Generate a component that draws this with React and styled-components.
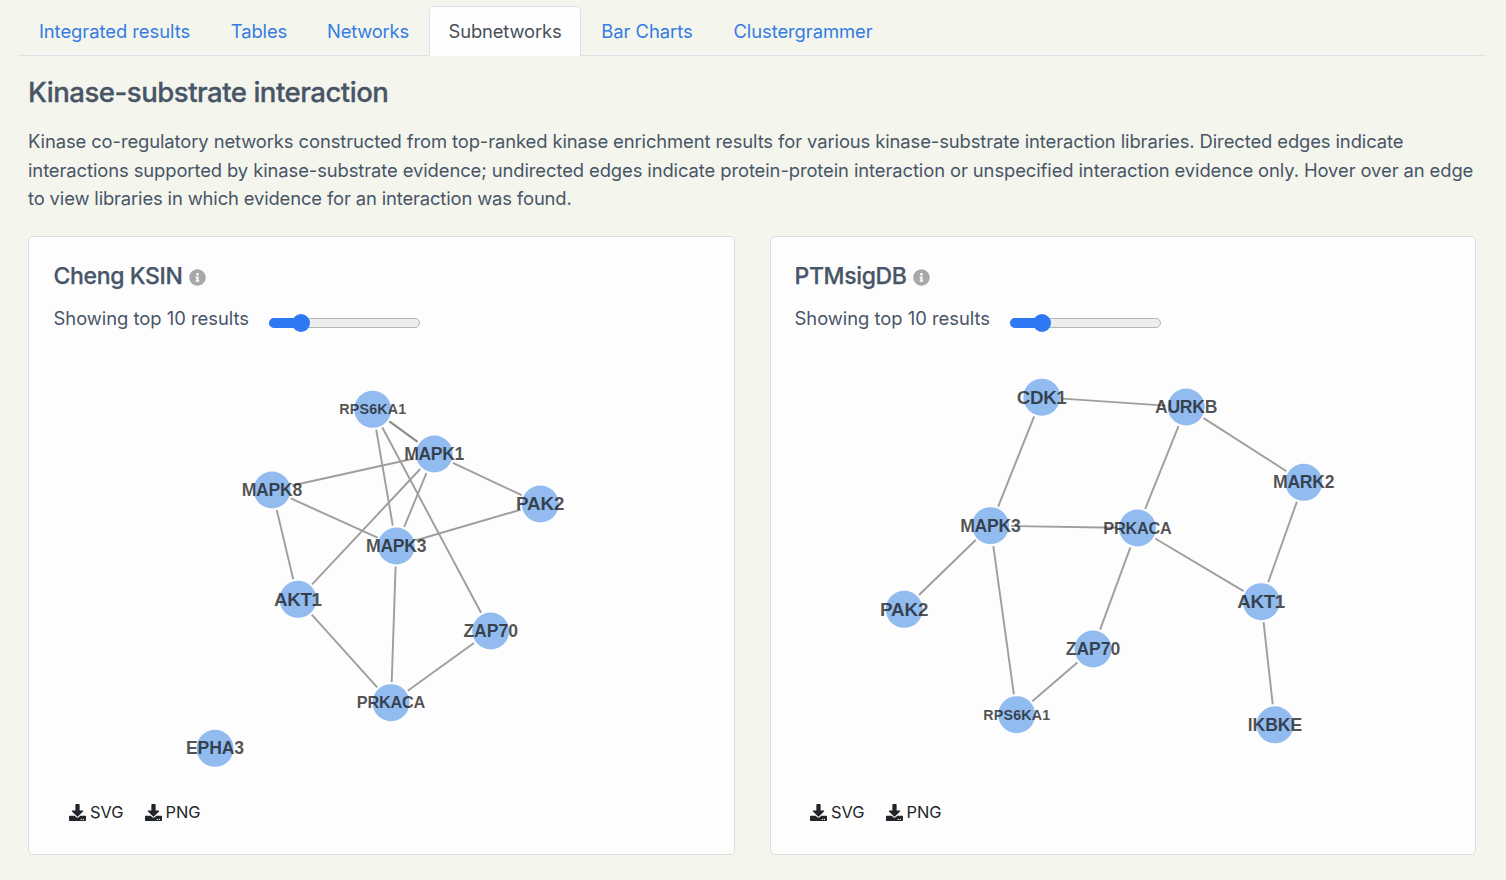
import React from "react";
import styled, { createGlobalStyle } from "styled-components";
import { FaInfoCircle, FaDownload } from "react-icons/fa";

const Global = createGlobalStyle`
  * { box-sizing: border-box; }
  body { margin: 0; background: #f4f5ed; color: #485567; font-family: Inter, "Liberation Sans", sans-serif; font-size: 18.4px; }
`;

const Page = styled.main`
  width: 1506px;
  height: 880px;
  padding-top: 6px;
  overflow: hidden;
`;

const Tabs = styled.nav`
  display: flex;
  height: 50px;
  margin: 0 20px 0 18px;
  border-bottom: 1px solid #dee2e6;
`;

const Tab = styled.a`
  display: flex;
  justify-content: center;
  width: ${(p) => p.$width}px;
  height: 50px;
  line-height: 49px;
  border: 1px solid ${(p) => (p.$active ? "#dee2e6" : "transparent")};
  border-bottom: 0;
  border-radius: 5px 5px 0 0;
  background: ${(p) => (p.$active ? "#fefefe" : "transparent")};
  color: ${(p) => (p.$active ? "#495057" : "#347ce2")};
  letter-spacing: ${(p) => p.$spacing}px;
  white-space: nowrap;
`;

const Content = styled.section`
  padding: 19px 30px 0 28px;
`;

const Heading = styled.h4`
  margin: 0 0 18px;
  font-size: 27.6px;
  font-weight: 500;
  line-height: 34px;
  letter-spacing: -0.51px;
  -webkit-text-stroke: 0.3px currentColor;
`;

const Description = styled.p`
  margin: 0 0 23px;
  line-height: 28.5px;
  height: 86px;
`;

const Line = styled.span`
  display: block;
  white-space: nowrap;
  letter-spacing: ${(p) => p.$spacing}px;
`;

const Cards = styled.div`
  display: grid;
  grid-template-columns: 707px 706px;
  gap: 35px;
`;

const Card = styled.article`
  display: flex;
  flex-direction: column;
  height: 619px;
  border: 1px solid #dcddd9;
  border-radius: 5px;
  background: #fdfdfd;
`;

const CardHeader = styled.header`
  height: 108px;
  padding: 25px 24px 0 ${(p) => p.$inset}px;
`;

const Title = styled.h5`
  display: flex;
  align-items: center;
  gap: 6px;
  margin: 0 0 13px;
  font-size: 23px;
  font-weight: 500;
  line-height: 29px;
  letter-spacing: -0.35px;
  -webkit-text-stroke: 0.25px currentColor;
  svg { margin-top: 2px; font-size: 17px; color: #a8a8a8; }
`;

const Control = styled.div`
  display: flex;
  align-items: center;
  line-height: 29px;
  white-space: nowrap;
`;

const Caption = styled.span`
  width: 215.5px;
  letter-spacing: -0.02px;
`;

const Track = styled.div`
  display: flex;
  align-items: center;
  width: 151px;
  height: 10px;
  margin-top: 9px;
  border: 1px solid #b5b5b5;
  border-radius: 5px;
  background: #ededed;
`;

const Fill = styled.div`
  flex: none;
  width: 32px;
  height: 10px;
  margin-left: -1px;
  border-radius: 5px 0 0 5px;
  background: #2e78f3;
`;

const Thumb = styled.div`
  flex: none;
  width: 18px;
  height: 18px;
  margin-left: -9px;
  border-radius: 50%;
  background: #2e78f3;
`;

const Graph = styled.svg`
  display: block;
  flex: none;
  width: 100%;
  height: 440px;
`;

const Edge = styled.line`
  stroke: ${(p) => (p.$strong ? "#8b8b8b" : "#9e9e9e")};
  stroke-width: ${(p) => (p.$strong ? 2.1 : 1.9)}px;
`;

const Dot = styled.circle`
  fill: #92bbef;
`;

const Label = styled.text`
  font-family: "Liberation Sans", Arial, sans-serif;
  font-weight: 700;
  fill: #111;
  fill-opacity: 0.73;
  text-anchor: middle;
`;

const Downloads = styled.footer`
  display: flex;
  gap: 21px;
  height: 54px;
  padding-left: ${(p) => p.$inset}px;
`;

const Download = styled.button`
  display: flex;
  align-items: center;
  gap: 4px;
  padding: 0;
  border: 0;
  background: none;
  color: #212529;
  font: 16.4px Inter, "Liberation Sans", sans-serif;
  svg { font-size: 17px; }
`;

const labels = {
  RPS6KA1: [14.3, 67],
  MAPK1: [17.6, 60],
  MAPK8: [17.6, 60.5],
  MAPK3: [17.6, 60.5],
  MARK2: [17.6, 61.5],
  PAK2: [18.8, 48.5],
  AKT1: [18.8, 48],
  CDK1: [18.8, 50],
  ZAP70: [17.6, 54.5],
  AURKB: [17.6, 62.5],
  PRKACA: [16.3, 68.5],
  EPHA3: [17.6, 58],
  IKBKE: [17.6, 54.5],
};

const graphs = [
  {
    title: "Cheng KSIN",
    inset: 24.5,
    footerInset: 40,
    viewBox: "29 345 705 440",
    nodes: {
      RPS6KA1: [372.7, 409.3],
      MAPK1: [434.3, 454],
      MAPK8: [272, 490],
      PAK2: [540.3, 504],
      MAPK3: [396.3, 546],
      AKT1: [298, 599.3],
      ZAP70: [490.7, 631],
      PRKACA: [391, 702.7],
      EPHA3: [215, 748.3],
    },
    edges: [
      ["RPS6KA1", "MAPK1", true],
      ["RPS6KA1", "MAPK3"],
      ["RPS6KA1", "ZAP70"],
      ["MAPK1", "MAPK8"],
      ["MAPK1", "PAK2"],
      ["MAPK1", "MAPK3"],
      ["MAPK1", "AKT1"],
      ["MAPK8", "MAPK3"],
      ["MAPK8", "AKT1"],
      ["PAK2", "MAPK3"],
      ["MAPK3", "PRKACA"],
      ["AKT1", "PRKACA"],
      ["ZAP70", "PRKACA"],
    ],
  },
  {
    title: "PTMsigDB",
    inset: 23.5,
    footerInset: 39,
    viewBox: "771 345 704 440",
    nodes: {
      CDK1: [1041.8, 397.2],
      AURKB: [1186.2, 407],
      MARK2: [1303.8, 482.3],
      MAPK3: [990.5, 525.7],
      PRKACA: [1137.5, 528],
      PAK2: [904.2, 609.3],
      AKT1: [1261.3, 601.7],
      ZAP70: [1093, 649],
      RPS6KA1: [1016.7, 714.7],
      IKBKE: [1275, 724.8],
    },
    edges: [
      ["CDK1", "AURKB"],
      ["CDK1", "MAPK3"],
      ["AURKB", "MARK2"],
      ["AURKB", "PRKACA"],
      ["MARK2", "AKT1"],
      ["MAPK3", "PRKACA"],
      ["MAPK3", "PAK2"],
      ["MAPK3", "RPS6KA1"],
      ["PRKACA", "AKT1"],
      ["PRKACA", "ZAP70"],
      ["ZAP70", "RPS6KA1"],
      ["AKT1", "IKBKE"],
    ],
  },
];

const GAP = 20.6;

function Network({ nodes, edges, viewBox }) {
  return (
    <Graph viewBox={viewBox}>
      {edges.map(([a, b, strong]) => {
        const [x1, y1] = nodes[a];
        const [x2, y2] = nodes[b];
        const d = Math.hypot(x2 - x1, y2 - y1);
        const ox = ((x2 - x1) / d) * GAP;
        const oy = ((y2 - y1) / d) * GAP;
        return <Edge key={a + b} x1={x1 + ox} y1={y1 + oy} x2={x2 - ox} y2={y2 - oy} $strong={strong} />;
      })}
      {Object.entries(nodes).map(([name, [x, y]]) => (
        <g key={name}>
          <Dot cx={x} cy={y} r="18.5" />
          <Label x={x} y={y + labels[name][0] * 0.34} fontSize={labels[name][0]} textLength={labels[name][1]}>
            {name}
          </Label>
        </g>
      ))}
    </Graph>
  );
}

const tabs = [
  ["Integrated results", 193, -0.05],
  ["Tables", 96, -0.1],
  ["Networks", 122, -0.2],
  ["Subnetworks", 152, -0.15],
  ["Bar Charts", 132, -0.05],
  ["Clustergrammer", 180, -0.07],
];

export default function App() {
  return (
    <Page>
      <Global />
      <Tabs>
        {tabs.map(([name, width, spacing]) => (
          <Tab key={name} $width={width} $spacing={spacing} $active={name === "Subnetworks"}>
            {name}
          </Tab>
        ))}
      </Tabs>
      <Content>
        <Heading>Kinase-substrate interaction</Heading>
        <Description>
          <Line $spacing={-0.1}>
            Kinase co-regulatory networks constructed from top-ranked kinase enrichment results for various kinase-substrate interaction libraries. Directed edges indicate
          </Line>
          <Line $spacing={-0.094}>
            interactions supported by kinase-substrate evidence; undirected edges indicate protein-protein interaction or unspecified interaction evidence only. Hover over an edge
          </Line>
          <Line $spacing={-0.14}>to view libraries in which evidence for an interaction was found.</Line>
        </Description>
        <Cards>
          {graphs.map((g) => (
            <Card key={g.title}>
              <CardHeader $inset={g.inset}>
                <Title>
                  {g.title}
                  <FaInfoCircle />
                </Title>
                <Control>
                  <Caption>Showing top 10 results</Caption>
                  <Track>
                    <Fill />
                    <Thumb />
                  </Track>
                </Control>
              </CardHeader>
              <Network {...g} />
              <Downloads $inset={g.footerInset}>
                <Download><FaDownload />SVG</Download>
                <Download><FaDownload />PNG</Download>
              </Downloads>
            </Card>
          ))}
        </Cards>
      </Content>
    </Page>
  );
}
